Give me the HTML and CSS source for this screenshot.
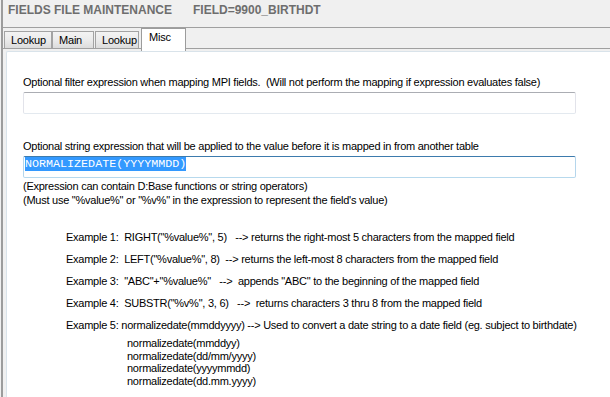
FILE: index.html
```html
<!DOCTYPE html>
<html>
<head>
<meta charset="utf-8">
<link rel="stylesheet" href="styles.css">
</head>
<body>
<div class="window">
  <div class="title">FIELDS FILE MAINTENANCE<span class="field">FIELD=9900_BIRTHDT</span></div>
  <div class="tabstrip">
    <div class="tab tab-first">Lookup</div>
    <div class="tab tab-main">Main</div>
    <div class="tab tab-lookup">Lookup</div>
    <div class="tab tab-selected">Misc</div>
  </div>
  <div class="page">
    <div class="panel">
      <div class="label label-first">Optional filter expression when mapping MPI fields.  (Will not perform the mapping if expression evaluates false)</div>
      <div class="input"></div>
      <div class="label label-second">Optional string expression that will be applied to the value before it is mapped in from another table</div>
      <div class="input input-focus"><span class="selected">NORMALIZEDATE(YYYYMMDD)</span></div>
      <div class="notes">
        <div class="line">(Expression can contain D:Base functions or string operators)</div>
        <div class="line">(Must use "%value%" or "%v%" in the expression to represent the field's value)</div>
      </div>
      <div class="examples">
        <div class="example">Example 1:  RIGHT("%value%", 5)   --> returns the right-most 5 characters from the mapped field</div>
        <div class="example">Example 2:  LEFT("%value%", 8)  --> returns the left-most 8 characters from the mapped field</div>
        <div class="example">Example 3:  "ABC"+"%value%"   -->  appends "ABC" to the beginning of the mapped field</div>
        <div class="example">Example 4:  SUBSTR("%v%", 3, 6)   -->  returns characters 3 thru 8 from the mapped field</div>
        <div class="example example-last">Example 5: normalizedate(mmddyyyy) --> Used to convert a date string to a date field (eg. subject to birthdate)</div>
        <div class="formats">
          <div class="format">normalizedate(mmddyy)</div>
          <div class="format">normalizedate(dd/mm/yyyy)</div>
          <div class="format">normalizedate(yyyymmdd)</div>
          <div class="format">normalizedate(dd.mm.yyyy)</div>
        </div>
      </div>
    </div>
  </div>
</div>
</body>
</html>
```

FILE: styles.css
```css
html, body {
  margin: 0;
  padding: 0;
  background: #f0f0f0;
  overflow: hidden;
}
body {
  font-family: "Liberation Sans", Arial, sans-serif;
  font-size: 11px;
  color: #000;
}
.window {
  margin-left: 1px;
  border-left: 2px solid #9c9c9c;
  height: 397px;
  display: flex;
  flex-direction: column;
}
.title {
  box-sizing: border-box;
  border-bottom: 1px solid #a0a0a0;
  height: 28px;
  padding: 3px 0 0 5px;
  font-size: 12px;
  font-weight: bold;
  line-height: 14px;
  color: #6e6e6e;
  white-space: pre;
}
.field {
  margin-left: 21px;
}
.tabstrip {
  display: flex;
  align-items: flex-end;
  height: 21px;
  box-sizing: border-box;
  padding-left: 1px;
  border-bottom: 1px solid #a0a0a0;
}
.tab {
  height: 17px;
  box-sizing: border-box;
  border: 1px solid #a3a3a3;
  border-bottom: none;
  padding: 2px 0 0 6px;
  line-height: 13px;
  letter-spacing: -0.2px;
  background: linear-gradient(#f3f3f3, #ebebeb 50%, #dcdcdc);
}
.tab-first { width: 48px; }
.tab-main { width: 42px; }
.tab-lookup { width: 44px; margin-left: 1px; }
.tab-selected {
  position: relative;
  z-index: 1;
  width: 45px;
  height: 23px;
  margin-left: 2px;
  margin-bottom: -3px;
  padding-left: 7px;
  background: #fff;
  border-color: #9c9c9c;
}
.page {
  flex: 1;
  display: flex;
  padding: 2px 0 0 3px;
}
.panel {
  flex: 1;
  background: #fff;
  border-top: 1px solid #d9e3ea;
  border-left: 1px solid #d9e3ea;
  border-top-left-radius: 2px;
  padding: 24px 0 0 16px;
  letter-spacing: -0.25px;
}
.label {
  line-height: 13px;
  white-space: pre;
}
.label-second {
  margin-top: 26px;
}
.input {
  margin-top: 3px;
  width: 553px;
  height: 22px;
  box-sizing: border-box;
  border: 1px solid #e2e3ea;
  border-top-color: #abadb3;
  border-bottom-color: #e3e9ef;
  border-radius: 2px;
  padding: 0 0 0 1px;
  background: #fff;
}
.input-focus {
  border-color: #b5d6ec;
  border-top-color: #3d7bad;
  border-bottom-color: #b7d9ed;
}
.selected {
  display: inline-block;
  font-family: "Liberation Mono", "Courier New", monospace;
  font-size: 11.7px;
  letter-spacing: 0;
  line-height: 14px;
  background: #3399ff;
  color: #fff;
}
.notes {
  margin-top: 1px;
}
.line {
  line-height: 14px;
  white-space: pre;
}
.examples {
  margin-top: 24px;
  padding-left: 43px;
}
.example {
  line-height: 13px;
  margin-bottom: 9px;
  white-space: pre;
}
.example-last {
  margin-top: 7px;
  margin-bottom: 5px;
}
.formats {
  padding-left: 61px;
}
.format {
  line-height: 12.5px;
  white-space: pre;
}
```
